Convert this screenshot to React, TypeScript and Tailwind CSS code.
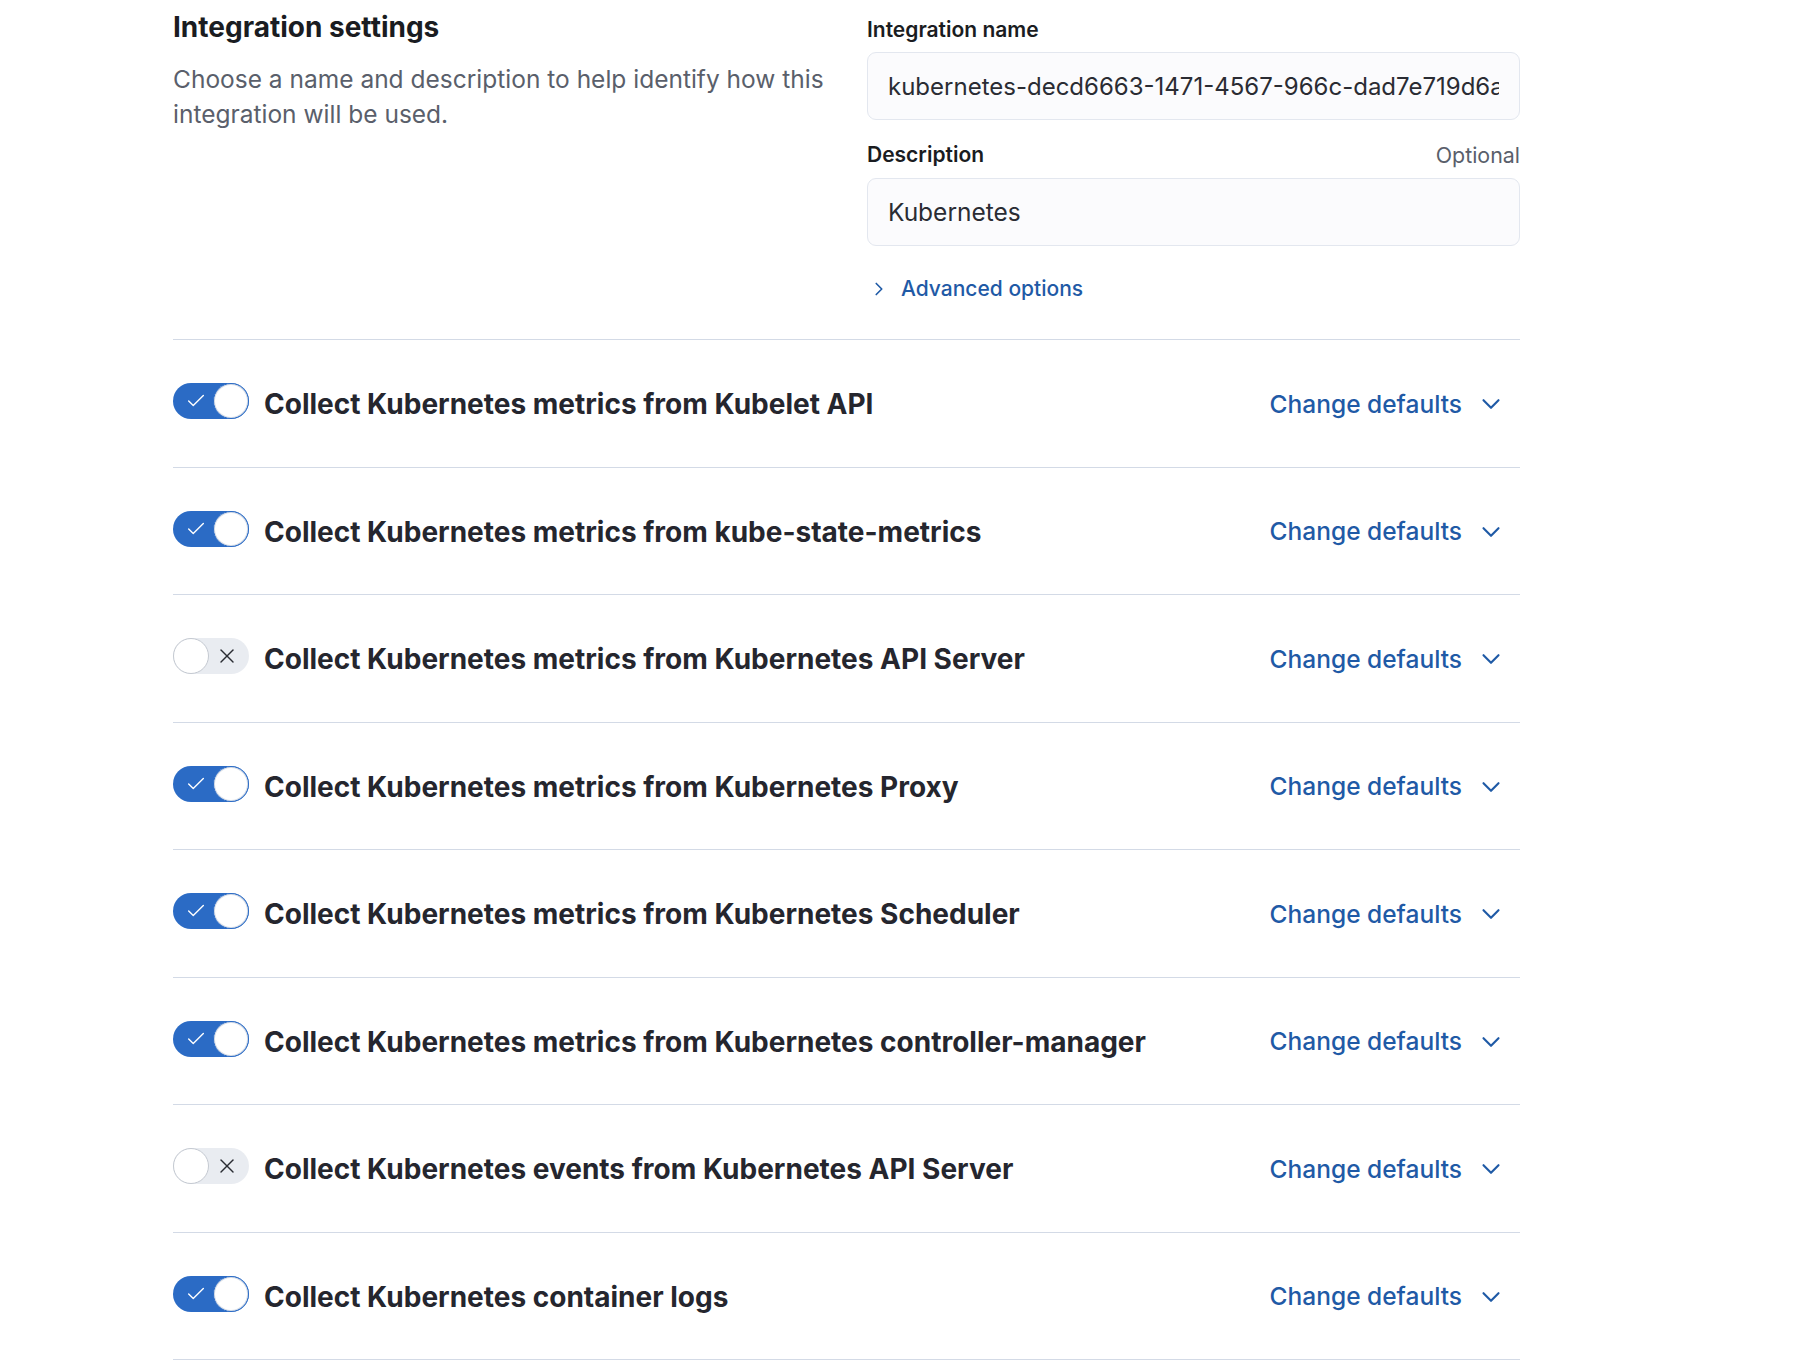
import { Check, X, ChevronDown, ChevronRight } from "lucide-react"

const streams = [
  { title: "Collect Kubernetes metrics from Kubelet API", on: true },
  { title: "Collect Kubernetes metrics from kube-state-metrics", on: true },
  { title: "Collect Kubernetes metrics from Kubernetes API Server", on: false },
  { title: "Collect Kubernetes metrics from Kubernetes Proxy", on: true },
  { title: "Collect Kubernetes metrics from Kubernetes Scheduler", on: true },
  { title: "Collect Kubernetes metrics from Kubernetes controller-manager", on: true },
  { title: "Collect Kubernetes events from Kubernetes API Server", on: false },
  { title: "Collect Kubernetes container logs", on: true },
]

function Toggle({ on }: { on: boolean }) {
  if (on) {
    return (
      <div className="relative flex h-[36px] w-[76px] shrink-0 items-center rounded-full bg-[#2b6bc5]">
        <Check className="ml-[12px] h-[22px] w-[22px] text-white" strokeWidth={1.5} />
        <div className="absolute right-0 top-0 h-[36px] w-[36px] rounded-full border border-[#2b6bc5] bg-white shadow-[inset_0_0_0_1px_#d7dde6]" />
      </div>
    )
  }
  return (
    <div className="relative flex h-[36px] w-[76px] shrink-0 items-center justify-end rounded-full bg-[#e9ecf1]">
      <X className="mr-[10px] h-[24px] w-[24px] text-[#2a2c33]" strokeWidth={1.4} />
      <div className="absolute left-0 top-0 h-[36px] w-[36px] rounded-full border border-[#c4c9d1] bg-white" />
    </div>
  )
}

export default function App() {
  return (
    <div className="min-h-[1366px] bg-white pl-[173px] font-['Inter','Liberation_Sans',sans-serif]">
      <div className="w-[1347px]">



        {/* settings top */}
        <div className="flex pt-[11px] pb-[36px] border-b border-[#d3dae6]">
          <div className="flex-1 pr-[30px]">
            <h2 className="text-[28px] font-bold leading-[32px] text-[#1a1c21]">Integration settings</h2>
            <p className="mt-[19px] text-[24.5px] leading-[35px] text-[#5a5f6b]">
              Choose a name and description to help identify how this integration will be used.
            </p>
          </div>

          <div className="w-[653px] pt-[6px]">
            <label className="block text-[21px] font-semibold leading-[26px] text-[#1a1c21]">Integration name</label>
            <input
              readOnly
              value="kubernetes-decd6663-1471-4567-966c-dad7e719d6a3"
              className="mt-[9px] block h-[68px] w-full rounded-[9px] border border-[#e3e7ef] bg-[#fbfbfd] px-[20px] text-[24px] text-[#2a2c33] outline-none"
            />

            <div className="mt-[22px] flex items-center justify-between leading-[26px]">
              <label className="text-[21px] font-semibold text-[#1a1c21]">Description</label>
              <span className="text-[21.4px] text-[#5a5f6b]">Optional</span>
            </div>
            <input
              readOnly
              value="Kubernetes"
              className="mt-[10px] block h-[68px] w-full rounded-[9px] border border-[#e3e7ef] bg-[#fbfbfd] px-[20px] text-[24.5px] text-[#2a2c33] outline-none"
            />

            <div className="mt-[29px] flex h-[28px] items-center">
              <ChevronRight className="ml-[1px] h-[22px] w-[22px] text-[#1f5aa6]" strokeWidth={1.8} />
              <span className="ml-[11px] text-[21px] font-medium text-[#1f5aa6]">Advanced options</span>
            </div>
          </div>
        </div>



        {/* streams */}
        {streams.map((s) => (
          <div key={s.title} className="flex h-[127.5px] items-start border-b border-[#d3dae6] pt-[43px]">
            <Toggle on={s.on} />
            <h3 className="ml-[15px] mt-[1px] flex-1 text-[28px] font-bold leading-[40px] text-[#25262e]">{s.title}</h3>
            <button className="mr-[14px] mt-[1px] flex h-[40px] items-center text-[24.5px] font-medium text-[#1f5aa6]">
              Change defaults
              <ChevronDown className="ml-[14px] h-[30px] w-[30px]" strokeWidth={1.7} />
            </button>
          </div>
        ))}
      </div>
    </div>
  )
}
